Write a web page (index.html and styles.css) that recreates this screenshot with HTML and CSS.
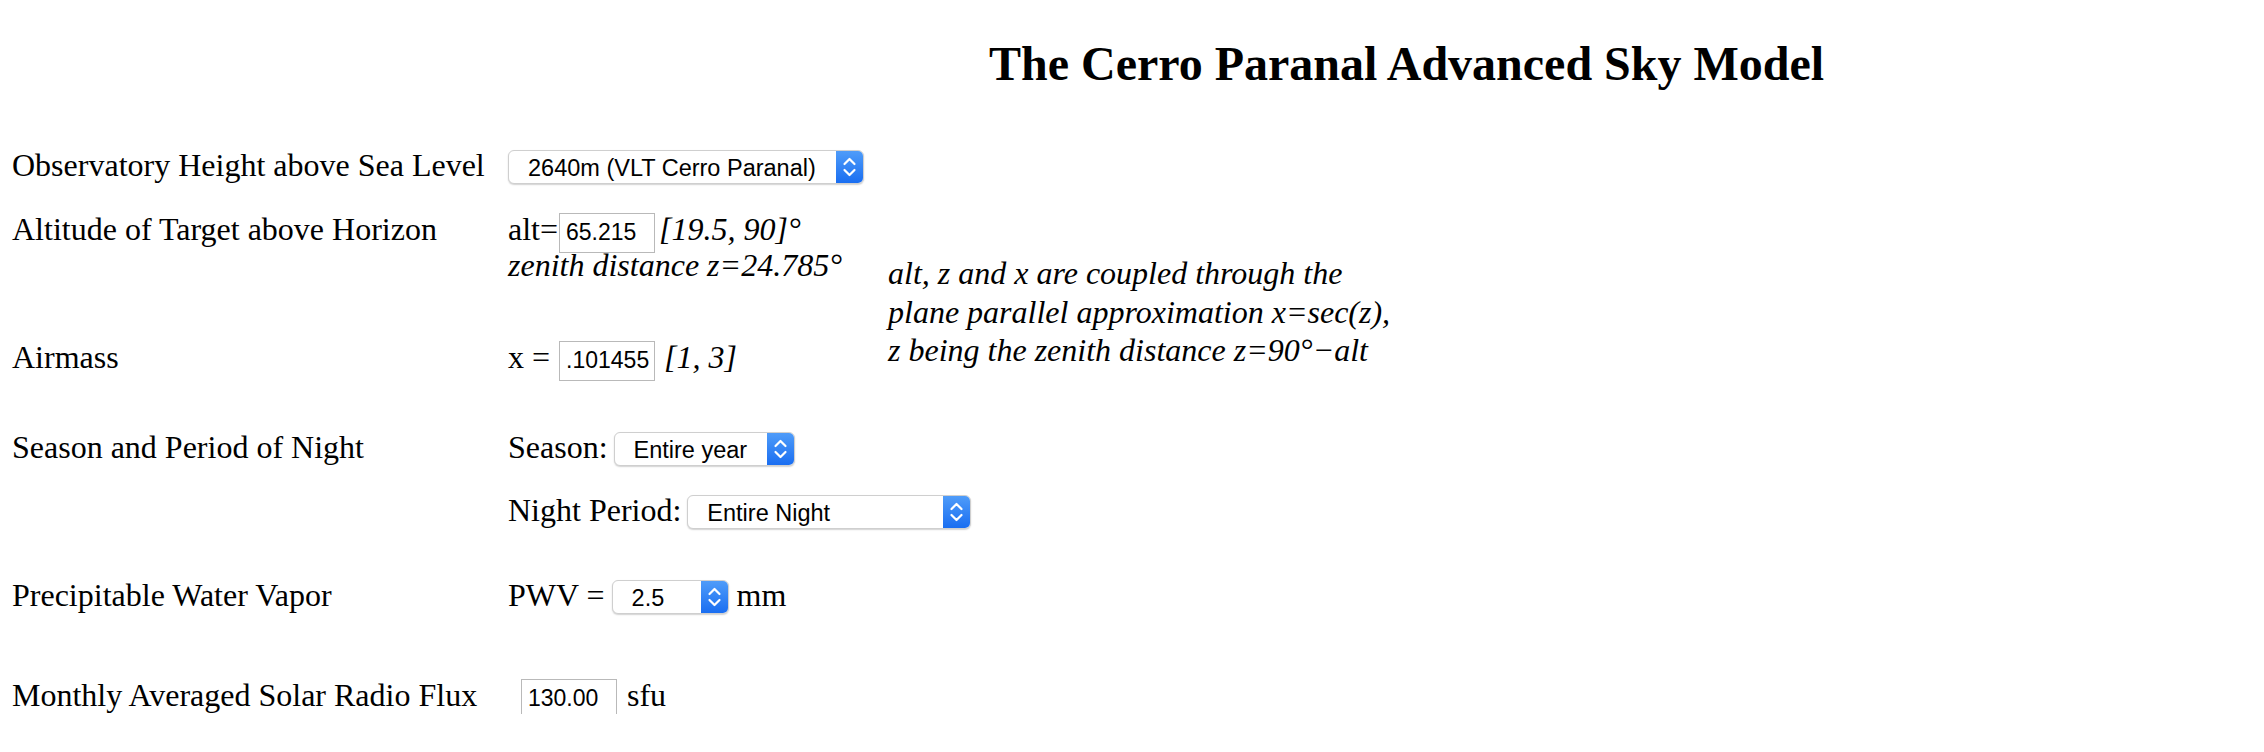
FILE: index.html
```html
<!DOCTYPE html>
<html>
<head>
<meta charset="utf-8">
<title>The Cerro Paranal Advanced Sky Model</title>
<link rel="stylesheet" href="styles.css">
</head>
<body>
<div class="page">
  <h2 class="title">The Cerro Paranal Advanced Sky Model</h2>
  <div class="form">
    <div class="label row1">Observatory Height above Sea Level</div>
    <div class="value row1">
      <div class="select w-obs"><span class="sel-text">2640m (VLT Cerro Paranal)</span><span class="sel-btn"><svg width="27" height="32" viewBox="0 0 27 32"><path d="M8.5 13 L13.5 8 L18.5 13 M8.5 19 L13.5 24 L18.5 19" fill="none" stroke="#fff" stroke-width="2.2" stroke-linecap="round" stroke-linejoin="round"/></svg></span></div>
    </div>

    <div class="label row2">Altitude of Target above Horizon</div>
    <div class="value row2"><span>alt=</span><input class="num gap-alt" type="text" value="65.215"><i class="gap-range1">[19.5, 90]°</i></div>
    <div class="note">alt, z and x are coupled through the<br>plane parallel approximation x=sec(z),<br>z being the zenith distance z=90°−alt</div>

    <div class="value row3"><i>zenith distance z=24.785°</i></div>

    <div class="label row4">Airmass</div>
    <div class="value row4"><span>x =</span><input class="num gap-x" type="text" value=".101455"><i class="gap-range2">[1, 3]</i></div>

    <div class="label row5">Season and Period of Night</div>
    <div class="value row5"><span>Season:</span><div class="select w-season gap-sel"><span class="sel-text">Entire year</span><span class="sel-btn"><svg width="27" height="32" viewBox="0 0 27 32"><path d="M8.5 13 L13.5 8 L18.5 13 M8.5 19 L13.5 24 L18.5 19" fill="none" stroke="#fff" stroke-width="2.2" stroke-linecap="round" stroke-linejoin="round"/></svg></span></div></div>

    <div class="value row6"><span>Night Period:</span><div class="select w-night gap-sel"><span class="sel-text">Entire Night</span><span class="sel-btn"><svg width="27" height="32" viewBox="0 0 27 32"><path d="M8.5 13 L13.5 8 L18.5 13 M8.5 19 L13.5 24 L18.5 19" fill="none" stroke="#fff" stroke-width="2.2" stroke-linecap="round" stroke-linejoin="round"/></svg></span></div></div>

    <div class="label row7">Precipitable Water Vapor</div>
    <div class="value row7"><span>PWV =</span><div class="select w-pwv gap-pwv"><span class="sel-text">2.5</span><span class="sel-btn"><svg width="27" height="32" viewBox="0 0 27 32"><path d="M8.5 13 L13.5 8 L18.5 13 M8.5 19 L13.5 24 L18.5 19" fill="none" stroke="#fff" stroke-width="2.2" stroke-linecap="round" stroke-linejoin="round"/></svg></span></div><span class="gap-unit">mm</span></div>

    <div class="label row8">Monthly Averaged Solar Radio Flux</div>
    <div class="value row8"><input class="num gap-flux" type="text" value="130.00"><span class="gap-sfu">sfu</span></div>
  </div>
</div>
</body>
</html>
```

FILE: styles.css
```css
html, body {
  margin: 0;
  padding: 0;
  background: #ffffff;
}

body {
  font-family: "Liberation Serif", "Times New Roman", serif;
  font-size: 32px;
  color: #000000;
}

.page {
  padding: 36px 0 0 12px;
}

.title {
  margin: 0 0 54px 0;
  padding-left: 977px;
  font-size: 48px;
  line-height: 56px;
  font-weight: bold;
  white-space: nowrap;
}

.form {
  display: grid;
  grid-template-columns: 496px 380px 1fr;
  grid-template-rows: 64px 36px 92px 90px 63px 85px 100px 38px;
  align-items: baseline;
  line-height: 38px;
}

.label {
  grid-column: 1;
  white-space: nowrap;
}

.value {
  grid-column: 2;
  display: flex;
  align-items: baseline;
  white-space: nowrap;
}

.row1 { grid-row: 1; }
.row2 { grid-row: 2; }
.row3 { grid-row: 3; }
.row4 { grid-row: 4; }
.row5 { grid-row: 5; }
.row6 { grid-row: 6; }
.row7 { grid-row: 7; }
.row8 { grid-row: 8; }

.note {
  grid-column: 3;
  grid-row: 2 / 5;
  align-self: start;
  padding-top: 44px;
  font-style: italic;
  line-height: 38.5px;
  white-space: nowrap;
}

.num {
  flex: none;
  font-family: "Liberation Sans", Arial, sans-serif;
  font-size: 23px;
  width: 96px;
  height: 40px;
  box-sizing: border-box;
  border: 1px solid #b9b9b9;
  border-radius: 0;
  padding: 0 0 0 6px;
  margin: 0;
  color: #000;
  background: #fff;
  outline: none;
}

.select {
  flex: none;
  display: inline-flex;
  height: 34px;
  box-sizing: border-box;
  border: 1px solid #cfcfcf;
  border-radius: 6px;
  box-shadow: 0 1px 1.5px rgba(0, 0, 0, 0.18);
  background: #ffffff;
  overflow: hidden;
  font-family: "Liberation Sans", Arial, sans-serif;
  font-size: 23.5px;
  color: #000;
}

.sel-text {
  flex: 1;
  padding: 3px 0 0 19px;
  line-height: 29px;
}

.sel-btn {
  width: 27px;
  flex: none;
  display: flex;
  align-items: center;
  justify-content: center;
  background: linear-gradient(#4f9cf9, #1a6ef1);
}

.w-obs { width: 356px; }
.w-season { width: 181px; }
.w-night { width: 284px; }
.w-pwv { width: 117px; }

.gap-alt { margin-left: 1px; }
.gap-range1 { margin-left: 4px; }
.gap-x { margin-left: 9px; }
.gap-range2 { margin-left: 9px; }
.gap-sel { margin-left: 6px; }
.gap-pwv { margin-left: 7px; }
.gap-unit { margin-left: 8px; }
.gap-flux { margin-left: 13px; }
.gap-sfu { margin-left: 10px; }
```
